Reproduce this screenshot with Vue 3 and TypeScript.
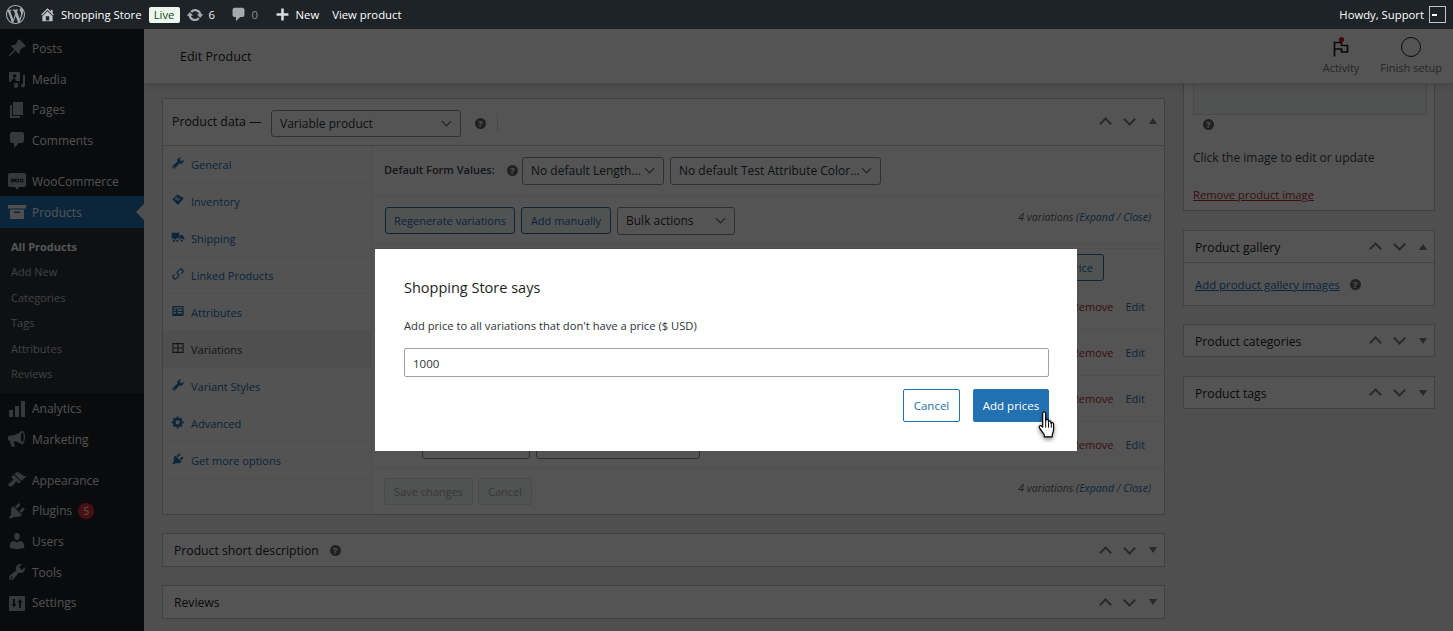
<template>
  <div class="page">
    <header class="adminbar">
      <svg class="ab-logo" viewBox="0 0 20 20"><path :d="icons.wp" /></svg>
      <svg class="ab-home" viewBox="0 0 20 20"><path :d="icons.home" /></svg>
      <span class="ab-site">Shopping Store</span>
      <span class="ab-live">Live</span>
      <svg class="ab-updates" viewBox="0 0 20 20"><path :d="icons.updates" /></svg>
      <span class="ab-count">6</span>
      <svg class="ab-comment" viewBox="0 0 20 20"><path :d="icons.comment" /></svg>
      <span class="ab-count muted">0</span>
      <svg class="ab-plus" viewBox="0 0 20 20"><path :d="icons.plus" /></svg>
      <span class="ab-new">New</span>
      <span class="ab-view">View product</span>
      <span class="ab-howdy">Howdy, Support</span>
      <span class="ab-avatar"><b></b></span>
    </header>

    <div class="layout">
      <aside class="sidebar">
        <template v-for="item in menu" :key="item.label">
          <div class="menu-item" :class="{ active: item.active, gap: item.gap }">
            <svg viewBox="0 0 20 20"><path :d="item.icon" fill-rule="evenodd" /></svg>
            <span>{{ item.label }}</span>
            <em v-if="item.badge" class="badge">{{ item.badge }}</em>
          </div>
          <ul v-if="item.active" class="submenu">
            <li v-for="(sub, i) in submenu" :key="sub" :class="{ current: i === 0 }">{{ sub }}</li>
          </ul>
        </template>
      </aside>

      <main class="main">
        <div class="screen-head">
          <h1>Edit Product</h1>
          <div class="head-actions">
            <div class="head-btn activity">
              <svg viewBox="0 0 16 20">
                <path d="M1.500 19.500V5.500h7v3h6v6.500H8.500v-3H1.500" fill="none" stroke="#1e1e1e" stroke-width="1.700" />
                <circle cx="8.500" cy="2.600" r="2.600" fill="#cc1818" />
              </svg>
              <span>Activity</span>
            </div>
            <div class="head-btn setup">
              <i class="ring"></i>
              <span>Finish setup</span>
            </div>
          </div>
        </div>

        <div class="content">
          <div class="col-left">
            <section class="box product-data">
              <div class="pd-head">
                <span class="pd-title">Product data —</span>
                <div class="select type-select">Variable product<i class="caret"></i></div>
                <i class="help">?</i>
                <i class="pd-sep"></i>
                <div class="handles"><i class="up"></i><i class="down"></i><i class="tri"></i></div>
              </div>
              <div class="pd-body">
                <ul class="tabs">
                  <li v-for="tab in tabs" :key="tab.label" :class="{ active: tab.label === 'Variations' }">
                    <svg viewBox="0 0 20 20"><path :d="tab.icon" fill-rule="evenodd" /></svg>
                    {{ tab.label }}
                  </li>
                </ul>
                <div class="panel">
                  <div class="defaults">
                    <strong>Default Form Values:</strong>
                    <i class="help">?</i>
                    <div class="select length">No default Length…<i class="caret"></i></div>
                    <div class="select color">No default Test Attribute Color…<i class="caret"></i></div>
                  </div>
                  <div class="toolbar">
                    <button class="btn regen">Regenerate variations</button>
                    <button class="btn manual">Add manually</button>
                    <div class="select bulk">Bulk actions<i class="caret"></i></div>
                    <span class="var-count">4 variations (<a>Expand</a> / <a>Close</a>)</span>
                  </div>
                  <div class="notice">
                    <button class="btn">Add price</button>
                  </div>
                  <div v-for="n in 4" :key="n" class="var-row">
                    <div class="select any-length">Any Length…<i class="caret"></i></div>
                    <div class="select any-color">Any Test Attribute Color…<i class="caret"></i></div>
                    <a class="remove">Remove</a>
                    <a class="edit">Edit</a>
                  </div>
                  <div class="panel-foot">
                    <button class="btn disabled">Save changes</button>
                    <button class="btn disabled">Cancel</button>
                    <span class="var-count">4 variations (<a>Expand</a> / <a>Close</a>)</span>
                  </div>
                </div>
              </div>
            </section>

            <section class="box bar">
              <h2>Product short description</h2>
              <i class="help">?</i>
              <div class="handles"><i class="up"></i><i class="down"></i><i class="tri closed"></i></div>
            </section>
            <section class="box bar">
              <h2>Reviews</h2>
              <div class="handles"><i class="up"></i><i class="down"></i><i class="tri closed"></i></div>
            </section>
          </div>

          <div class="col-right">
            <section class="box image-box">
              <div class="image-holder"></div>
              <i class="help">?</i>
              <p>Click the image to edit or update</p>
              <a class="remove-image">Remove product image</a>
            </section>

            <section class="box side-box">
              <div class="side-head">
                <h2>Product gallery</h2>
                <div class="handles"><i class="up"></i><i class="down"></i><i class="tri"></i></div>
              </div>
              <div class="gallery-body">
                <a>Add product gallery images</a>
                <i class="help">?</i>
              </div>
            </section>
            <section class="box side-box">
              <div class="side-head flat">
                <h2>Product categories</h2>
                <div class="handles"><i class="up"></i><i class="down"></i><i class="tri closed"></i></div>
              </div>
            </section>
            <section class="box side-box">
              <div class="side-head flat">
                <h2>Product tags</h2>
                <div class="handles"><i class="up"></i><i class="down"></i><i class="tri closed"></i></div>
              </div>
            </section>
          </div>
        </div>
      </main>
    </div>

    <div class="overlay"></div>

    <div class="dialog">
      <h3>Shopping Store says</h3>
      <p>Add price to all variations that don't have a price ($ USD)</p>
      <input class="price-input" type="text" :value="price" />
      <div class="dialog-actions">
        <button class="dlg-cancel">Cancel</button>
        <button class="dlg-ok">Add prices</button>
      </div>
      <svg class="hand" viewBox="0 0 18 26">
        <path
          d="M5 2.200c0-1.700 2.700-1.700 2.700 0v7.400l.2-1c.2-1.300 2.400-1.200 2.400.3v1.100c.3-1.200 2.400-1.100 2.400.4v1c.4-1.100 2.400-.9 2.400.6v5.200c0 1.900-.7 3-1.200 4.400v2.400H6.400v-2.200c-.9-1.400-3-3.700-4.400-6.100-.9-1.600.6-2.800 1.900-1.800L5 15z"
          fill="#fff"
          stroke="#000"
          stroke-width="1.100"
          stroke-linejoin="round"
        />
        <path d="M7.800 10v5.500M10.400 10.500v5M13 11v4.500" stroke="#000" stroke-width=".9" fill="none" />
      </svg>
    </div>
  </div>
</template>

<script setup lang="ts">
import { ref } from 'vue'

interface MenuItem {
  label: string
  icon: string
  active?: boolean
  gap?: boolean
  badge?: string
}

const price = ref('1000')

const icons = {
  wp: 'M20 10c0-5.51-4.49-10-10-10C4.48 0 0 4.49 0 10c0 5.52 4.48 10 10 10 5.51 0 10-4.48 10-10zM7.78 15.37L4.37 6.22c.55-.02 1.17-.08 1.17-.08.5-.06.44-1.13-.06-1.11 0 0-1.45.11-2.37.11-.18 0-.37 0-.58-.01C4.12 2.69 6.87 1.11 10 1.11c2.33 0 4.45.87 6.05 2.34-.68-.11-1.65.39-1.65 1.58 0 .74.45 1.36.9 2.1.35.61.55 1.36.55 2.46 0 1.49-1.4 5-1.4 5l-3.03-8.37c.54-.02.82-.17.82-.17.5-.05.44-1.25-.06-1.22 0 0-1.44.12-2.38.12-.87 0-2.33-.12-2.33-.12-.5-.03-.56 1.2-.06 1.22l.92.08 1.26 3.41zM17.41 10c.24-.64.74-1.87.43-4.25.7 1.29 1.05 2.71 1.05 4.25 0 3.29-1.73 6.24-4.4 7.78.97-2.59 1.94-5.2 2.92-7.78zM6.1 18.09C3.12 16.65 1.11 13.53 1.11 10c0-1.3.23-2.48.72-3.59C3.25 10.3 4.67 14.2 6.1 18.09zm4.03-6.63l2.58 6.98c-.86.29-1.76.45-2.71.45-.79 0-1.57-.11-2.29-.33.81-2.38 1.62-4.74 2.42-7.1z',
  home: 'M16 8.5l1.53 1.53-1.06 1.06L10 4.62l-6.47 6.47-1.06-1.06L10 2.5l4 4v-2h2v4zm-6-2.46l6 5.99V18H4v-5.97zM12 17v-5H8v5h4z',
  updates: 'M10.2 3.28c3.53 0 6.43 2.61 6.92 6h2.08l-3.5 4-3.5-4h2.32c-.45-1.97-2.21-3.45-4.32-3.45-1.45 0-2.73.71-3.54 1.78L4.95 5.66C6.23 4.2 8.11 3.28 10.2 3.28zm-.4 13.44c-3.52 0-6.43-2.61-6.92-6H.8l3.5-4c1.17 1.33 2.33 2.67 3.5 4H5.48c.45 1.97 2.21 3.45 4.32 3.45 1.45 0 2.73-.71 3.54-1.78l1.71 1.95c-1.28 1.46-3.15 2.38-5.25 2.38z',
  comment: 'M5 2h10q1.500 0 2 2v7q-.3 2-2 2h-3l-5 5v-5H5q-1.700 0-2-2V4q.5-2 2-2z',
  plus: 'M17 8.500v3h-5.500V17h-3v-5.500H3v-3h5.500V3h3v5.500z',
  pin: 'M10.44 3.02l1.82-1.82 6.51 6.51-1.82 1.82-1.05-.21-3.2 3.2.26 2.1-1.26 1.26-3.3-3.3-4.9 4.9-1.9.9.9-1.9 4.9-4.9-3.3-3.3 1.26-1.26 2.1.26 3.2-3.2z',
  media: 'M3 3h9a1 1 0 0 1 1 1v8H9v-1l-2-2-3 3v1H3a1 1 0 0 1-1-1V4a1 1 0 0 1 1-1zm4.500 2.200a1.800 1.800 0 1 0 0 3.600 1.800 1.800 0 0 0 0-3.600zM16 6h2v10.500a2 2 0 1 1-2-2V6zM7 14h4v3a2 2 0 1 1-1.500-1.900V15.500H7z',
  pages: 'M6 15V2h10v13H6zm-1 1h8v2H3V5h2v11z',
  woo: 'M3 2h14a2 2 0 0 1 2 2v10a2 2 0 0 1-2 2h-5l-2 3-2-3H3a2 2 0 0 1-2-2V4a2 2 0 0 1 2-2zm.5 5.500l.8 4h1l.7-2.400.8 2.400h1l.8-4h-1l-.4 2.300-.7-2.300h-.9l-.7 2.300-.4-2.300zm6.600 0a2 2 0 1 0 0 4 2 2 0 0 0 0-4zm0 1a1 1 0 1 1 0 2 1 1 0 0 1 0-2zm4.400-1a2 2 0 1 0 0 4 2 2 0 0 0 0-4zm0 1a1 1 0 1 1 0 2 1 1 0 0 1 0-2z',
  archive: 'M19 6.500H1V3h18v3.500zM3 7.500h14V17H3V7.500zm4 2v1.600h6V9.500H7z',
  analytics: 'M2 11h4v7H2zM8 7h4v11H8zM14 2h4v16h-4z',
  megaphone: 'M18 7.500c0-3-1.200-5.500-2.700-5.500-.9 0-1.600.5-2.300 1.200C10.800 5 7 6.200 3 6.500c-1.200.1-2 1-2 2.200v1c0 1.100.7 2 1.800 2.200l1.700 5.400c.2.6.7.9 1.300.8l1.200-.3c.6-.2.9-.8.7-1.400L6.500 12.300c2.600.1 4.800.8 6.500 2 .7.7 1.400 1.200 2.300 1.200C16.800 15.500 18 11 18 7.500zm-2.700 5.500c-.8 0-1.500-2.300-1.500-5s.7-4.500 1.500-4.500 1.500 1.800 1.500 4.500-.7 5-1.500 5z',
  brush: 'M14.48 11.06L7.41 3.99l1.5-1.5c.5-.56 2.3-.47 3.51.32 1.21.8 1.43 1.28 2.91 2.1 1.18.64 2.45 1.26 4.45.85zm-.71.71L6.7 4.7 4.93 6.47c-.39.39-.39 1.02 0 1.41l1.06 1.06c.39.39.39 1.03 0 1.42-.6.6-1.43 1.11-2.21 1.69-.35.26-.7.53-1.01.84C1.43 13.01.95 14.71 2 15.95c1.05 1.05 2.95.57 4.2-.79.31-.31.58-.66.84-1.01.58-.78 1.09-1.61 1.69-2.21.39-.39 1.03-.39 1.42 0l1.06 1.06c.39.39 1.02.39 1.41 0z',
  plugin: 'M13.11 4.36L9.87 7.6 8 5.73l3.24-3.24c.35-.34 1.05-.2 1.56.32.52.51.66 1.21.31 1.55zm-8 1.77l.91-1.12 9.01 9.01-1.19.84c-.71.71-2.63 1.16-3.82 1.16H6.14L4.9 17.26c-.59.59-1.54.59-2.12 0-.59-.58-.59-1.53 0-2.12l1.24-1.24v-3.88c0-1.13.4-3.19 1.09-3.89zm7.26 3.97l3.24-3.24c.34-.35 1.04-.21 1.55.31.52.51.66 1.21.31 1.55l-3.24 3.25z',
  users: 'M10 9.25c-2.27 0-2.73-3.44-2.73-3.44C7 4.02 7.82 2 9.97 2c2.16 0 2.98 2.02 2.71 3.81 0 0-.41 3.44-2.68 3.44zm0 2.57L12.72 10c2.39 0 4.52 2.33 4.52 4.53v2.49s-3.65 1.13-7.24 1.13c-3.65 0-7.24-1.13-7.24-1.13v-2.49c0-2.25 1.94-4.48 4.47-4.48z',
  wrench: 'M16.68 9.77c-1.34 1.34-3.3 1.67-4.95.99l-5.41 6.52c-.99.99-2.59.99-3.58 0s-.99-2.59 0-3.57l6.52-5.42c-.68-1.65-.35-3.61.99-4.95 1.28-1.28 3.12-1.62 4.72-1.06l-2.89 2.89 2.82 2.82 2.86-2.87c.53 1.58.18 3.39-1.08 4.65zM3.81 16.21c.4.39 1.04.39 1.43 0 .4-.4.4-1.04 0-1.43-.39-.4-1.03-.4-1.43 0-.39.39-.39 1.03 0 1.43z',
  settings: 'M3 3h14a1 1 0 0 1 1 1v13a1 1 0 0 1-1 1H3a1 1 0 0 1-1-1V4a1 1 0 0 1 1-1zm3 3v5H4.500L7 14.500 9.500 11H8V6zm7 0l-2.500 3.500H12V15h2V9.500h1.500z',
  tag: 'M2 9l7-7 9 5-1 2-7 8-8-8zm6-3.500L5 8.500l1 1 3-3zm2 1l-3 3 1 1 3-3zm2 1l-3 3 1 1 3-3z',
  truck: 'M1 4h11v10h-.5a2.500 2.500 0 0 0-5 0h-1a2.500 2.500 0 0 0-4.500-1zm12 3h3l3 3.500V14h-1a2.500 2.500 0 0 0-4.800-.2H13zM4 14a1.500 1.500 0 1 1 0 3 1.500 1.500 0 0 1 0-3zm11.500 0a1.500 1.500 0 1 1 0 3 1.500 1.500 0 0 1 0-3zM9 14a1.500 1.500 0 1 1 0 3 1.500 1.500 0 0 1 0-3z',
  link: 'M16.900 3.100a3.700 3.700 0 0 0-5.200 0L9 5.800a3.700 3.700 0 0 0 0 5.200l1.100-1.100a2.200 2.200 0 0 1 0-3l2.700-2.700a2.200 2.200 0 0 1 3 3l-1.300 1.300a5 5 0 0 1 .3 2l2.100-2.100a3.700 3.700 0 0 0 0-5.300zM3.100 16.900a3.700 3.700 0 0 0 5.200 0L11 14.200a3.700 3.700 0 0 0 0-5.200L9.900 10.100a2.200 2.200 0 0 1 0 3l-2.700 2.700a2.200 2.200 0 0 1-3-3l1.300-1.300a5 5 0 0 1-.3-2L3.100 11.600a3.700 3.700 0 0 0 0 5.300z',
  list: 'M2 3h16v14H2V3zm1.500 3.500h13V4.500h-13zM4 8v2h3V8zm5 0v2h7V8zm-5 3.500v2h3v-2zm5 0v2h7v-2z',
  grid: 'M2 3h16v14H2V3zm1.500 1.500v4.700h5.700V4.500zm7.200 0v4.700h5.800V4.500zM3.500 10.800v4.700h5.700v-4.700zm7.200 0v4.700h5.800v-4.700z',
  gear: 'M18 12h-2.180c-.17.7-.44 1.350-.81 1.930l1.540 1.540-2.100 2.100-1.540-1.540c-.58.36-1.230.63-1.910.79V19H8v-2.180c-.68-.16-1.330-.43-1.910-.79l-1.540 1.540-2.120-2.120 1.540-1.540c-.36-.58-.63-1.230-.79-1.910H1V9.030h2.170c.16-.7.44-1.350.8-1.940L2.430 5.550l2.100-2.100 1.540 1.540c.58-.37 1.240-.64 1.930-.81V2h3v2.180c.68.16 1.330.43 1.910.79l1.540-1.540 2.120 2.120-1.540 1.540c.36.59.64 1.240.8 1.940H18V12zm-8.500 1.500c1.660 0 3-1.340 3-3s-1.340-3-3-3-3 1.340-3 3 1.340 3 3 3z'
}

const menu: MenuItem[] = [
  { label: 'Posts', icon: icons.pin },
  { label: 'Media', icon: icons.media },
  { label: 'Pages', icon: icons.pages },
  { label: 'Comments', icon: icons.comment },
  { label: 'WooCommerce', icon: icons.woo, gap: true },
  { label: 'Products', icon: icons.archive, active: true },
  { label: 'Analytics', icon: icons.analytics },
  { label: 'Marketing', icon: icons.megaphone },
  { label: 'Appearance', icon: icons.brush, gap: true },
  { label: 'Plugins', icon: icons.plugin, badge: '5' },
  { label: 'Users', icon: icons.users },
  { label: 'Tools', icon: icons.wrench },
  { label: 'Settings', icon: icons.settings }
]

const submenu = ['All Products', 'Add New', 'Categories', 'Tags', 'Attributes', 'Reviews']

const tabs = [
  { label: 'General', icon: icons.wrench },
  { label: 'Inventory', icon: icons.tag },
  { label: 'Shipping', icon: icons.truck },
  { label: 'Linked Products', icon: icons.link },
  { label: 'Attributes', icon: icons.list },
  { label: 'Variations', icon: icons.grid },
  { label: 'Variant Styles', icon: icons.wrench },
  { label: 'Advanced', icon: icons.gear },
  { label: 'Get more options', icon: icons.plugin }
]
</script>

<style>
html,
body {
  margin: 0;
  overflow: hidden;
  background: #f0f0f1;
}
</style>

<style scoped>
.page {
  position: relative;
  height: 631px;
  overflow: hidden;
  font-family: "Open Sans", "Noto Sans", sans-serif;
  font-size: 12px;
  color: #3c434a;
  background: #f0f0f1;
}

/* admin bar stays above the dim layer */
.adminbar {
  position: relative;
  z-index: 30;
  display: flex;
  align-items: center;
  height: 29px;
  background: #1d2327;
  color: #f0f0f1;
  padding-left: 6px;
  padding-right: 7px;
  font-size: 11.3px;
}

.adminbar svg {
  fill: #a7aaad;
  flex: none;
}

.ab-logo {
  width: 19px;
  height: 19px;
}

.ab-home {
  width: 17px;
  height: 17px;
  margin-left: 14px;
  fill: #c3c4c7 !important;
}

.ab-site {
  margin-left: 5px;
  color: #fff;
}

.ab-live {
  margin-left: 7px;
  width: 31px;
  height: 16px;
  line-height: 15px;
  text-align: center;
  background: #ecf7ed;
  color: #1e4620;
  border-radius: 2px;
}

.ab-updates {
  width: 18px;
  height: 18px;
  margin-left: 6px;
}

.ab-count {
  margin-left: 5px;
  width: 7px;
}

.ab-count.muted {
  color: #8c8f94;
}

.ab-comment {
  width: 17px;
  height: 17px;
  margin-left: 14px;
}

.ab-comment + .ab-count {
  margin-left: 5px;
}

.ab-plus {
  width: 17px;
  height: 17px;
  margin-left: 15px;
  fill: #dcdcde !important;
}

.ab-new {
  margin-left: 5px;
  color: #fff;
}

.ab-view {
  margin-left: 13px;
  color: #fff;
}

.ab-howdy {
  margin-left: auto;
  color: #fff;
}

.ab-avatar {
  display: flex;
  align-items: center;
  margin-left: 5px;
  width: 15px;
  height: 15px;
  border: 1px solid #c3c4c7;
  background: #1d2327;
}

.ab-avatar b {
  display: block;
  width: 5px;
  height: 2px;
  margin-left: 2px;
  background: #fff;
}

.layout {
  display: flex;
  height: 602px;
}

.sidebar {
  width: 144px;
  flex: none;
  padding-top: 4px;
  background: #1d2327;
  color: #f0f0f1;
  font-size: 12px;
}

.menu-item {
  position: relative;
  display: flex;
  align-items: center;
  height: 30.7px;
}

.menu-item svg {
  width: 20px;
  height: 20px;
  margin-left: 7px;
  margin-right: 5px;
  fill: #a7aaad;
  flex: none;
}

.menu-item.gap {
  margin-top: 10px;
}

.menu-item.active {
  height: 32px;
  background: #2271b1;
  color: #fff;
}

.menu-item.active svg {
  fill: #f0f0f1;
}

.menu-item.active::after {
  content: "";
  position: absolute;
  right: 0;
  top: 8px;
  border: 8px solid transparent;
  border-left: 0;
  border-right-color: #f0f0f1;
}

.badge {
  margin-left: 6px;
  width: 16px;
  height: 16px;
  line-height: 16px;
  border-radius: 50%;
  background: #d63638;
  color: #fff;
  font-size: 10px;
  font-style: normal;
  text-align: center;
}

.submenu {
  list-style: none;
  margin: 0;
  padding: 5.5px 0 7.1px 11px;
  background: #2c3338;
  color: #c3c4c7;
  font-size: 11px;
}

.submenu li {
  height: 25.4px;
  line-height: 25.4px;
}

.submenu li.current {
  color: #fff;
  font-weight: 700;
}

.main {
  flex: 1;
  min-width: 0;
}

.screen-head {
  position: relative;
  z-index: 2;
  display: flex;
  justify-content: space-between;
  height: 54px;
  padding-left: 36px;
  background: #fff;
  box-shadow: 0 2px 10px rgba(0, 0, 0, .18);
}

.screen-head h1 {
  margin: 0;
  font-size: 12.5px;
  font-weight: 500;
  line-height: 56px;
  color: #1d2327;
}

.head-actions {
  display: flex;
  gap: 21px;
  padding-right: 11px;
}

.head-btn {
  display: flex;
  flex-direction: column;
  align-items: center;
  padding-top: 8px;
  font-size: 11px;
  color: #757575;
}

.head-btn svg {
  width: 16px;
  height: 20px;
}

.head-btn span {
  margin-top: 3px;
  line-height: 16px;
}

.ring {
  display: block;
  box-sizing: border-box;
  width: 20px;
  height: 20px;
  border: 1.5px solid #1e1e1e;
  border-radius: 50%;
}

.content {
  display: flex;
  gap: 18px;
  padding-left: 18px;
}

.col-left {
  width: 1003px;
  flex: none;
  padding-top: 15px;
}

.col-right {
  width: 252px;
  flex: none;
}

.box {
  box-sizing: border-box;
  border: 1px solid #c3c4c7;
  background: #fff;
}

.select {
  position: relative;
  box-sizing: border-box;
  display: flex;
  align-items: center;
  height: 27px;
  padding-left: 8px;
  border: 1px solid #8c8f94;
  border-radius: 3px;
  background: #fff;
  color: #2c3338;
  font-size: 12px;
  white-space: nowrap;
  overflow: hidden;
}

.caret {
  position: absolute;
  right: 10px;
  top: 7px;
  width: 6px;
  height: 6px;
  border-right: 1.5px solid #50575e;
  border-bottom: 1.5px solid #50575e;
  transform: rotate(45deg);
  background: #fff;
}

.help {
  display: block;
  flex: none;
  width: 11px;
  height: 11px;
  border-radius: 50%;
  background: #666;
  color: #fff;
  font-size: 9px;
  font-weight: 700;
  font-style: normal;
  line-height: 11px;
  text-align: center;
}

.handles {
  display: flex;
  align-items: center;
  margin-left: auto;
}

.handles i {
  display: block;
  box-sizing: border-box;
}

.handles .up,
.handles .down {
  width: 9px;
  height: 9px;
  border-left: 2px solid #787c82;
  border-top: 2px solid #787c82;
}

.handles .up {
  transform: translateY(2px) rotate(45deg);
}

.handles .down {
  margin-left: 15px;
  transform: translateY(-2px) rotate(225deg);
}

.handles .tri {
  margin-left: 15px;
  border: 4px solid transparent;
  border-top: 0;
  border-bottom: 6px solid #787c82;
}

.handles .tri.closed {
  border-bottom: 0;
  border-top: 6px solid #787c82;
}

.pd-head {
  display: flex;
  align-items: center;
  height: 46px;
  padding: 0 7px 0 9px;
  border-bottom: 1px solid #c3c4c7;
}

.pd-title {
  width: 99px;
  flex: none;
  font-size: 12.3px;
  color: #1d2327;
  font-weight: 500;
  margin-top: -2px;
}

.type-select {
  width: 190px;
  margin-top: 3px;
}

.pd-head .help {
  margin-left: 14px;
  margin-top: 2px;
}

.pd-sep {
  width: 1px;
  height: 17px;
  margin-left: 11px;
  background: #dcdcde;
}

.pd-head .handles {
  margin-top: -2px;
}

.pd-body {
  display: flex;
}

.tabs {
  list-style: none;
  margin: 0;
  padding: 0;
  width: 209px;
  flex: none;
  box-sizing: border-box;
  background: #fafafa;
  border-right: 1px solid #eee;
}

.tabs li {
  display: flex;
  align-items: center;
  box-sizing: border-box;
  height: 37px;
  padding-left: 8px;
  border-bottom: 1px solid #eee;
  color: #2271b1;
  font-size: 11px;
}

.tabs li svg {
  width: 14px;
  height: 14px;
  margin-right: 6px;
  margin-top: -3px;
  fill: #2271b1;
}

.tabs li.active {
  background: #eee;
  color: #3c434a;
}

.tabs li.active svg {
  fill: #3c434a;
}

.panel {
  flex: 1;
  min-width: 0;
  font-size: 11px;
}

.defaults {
  display: flex;
  align-items: center;
  box-sizing: border-box;
  height: 50px;
  padding-left: 12px;
  border-bottom: 1px solid #eee;
}

.defaults strong {
  width: 123px;
  flex: none;
  font-size: 11px;
  font-weight: 600;
  margin-top: -2px;
}

.defaults .select {
  height: 28px;
}

.length {
  width: 142px;
  margin-left: 4px;
}

.color {
  width: 211px;
  margin-left: 6px;
}

.toolbar {
  display: flex;
  align-items: center;
  box-sizing: border-box;
  height: 48px;
  padding: 1px 13px 0 13px;
  border-bottom: 1px solid #eee;
}

.btn {
  box-sizing: border-box;
  height: 27px;
  padding: 0 10px;
  border: 1px solid #2271b1;
  border-radius: 3px;
  background: #f6f7f7;
  color: #2271b1;
  font: inherit;
  font-size: 11px;
}

.regen {
  width: 130px;
  padding: 0;
}

.manual {
  width: 90px;
  padding: 0;
  margin-left: 6px;
}

.bulk {
  width: 118px;
  height: 28px;
  margin-top: 1px;
  margin-left: 6px;
}

.var-count {
  margin-left: auto;
  margin-top: -7px;
  font-size: 10.6px;
  font-style: italic;
  color: #646970;
}

.var-count a {
  color: #2271b1;
}

.notice {
  display: flex;
  justify-content: flex-end;
  box-sizing: border-box;
  height: 40px;
  padding: 5px 60px 0 0;
  margin-top: 4px;
  border-top: 1px solid #eee;
  margin-bottom: -4px;
}

.var-row {
  display: flex;
  align-items: center;
  box-sizing: border-box;
  height: 46px;
  padding: 0 19px 0 50px;
  border-bottom: 1px solid #eee;
}

/* text sits high in these so only the lower edge shows under the dialog */
.any-length {
  width: 108px;
  height: 26px;
  margin-top: 2px;
  padding-bottom: 9px;
  font-size: 11px;
}

.any-color {
  width: 164px;
  height: 26px;
  margin-left: 6px;
  margin-top: 2px;
  padding-bottom: 9px;
  font-size: 11px;
}

.remove {
  margin-left: auto;
  color: #b32d2e;
  font-size: 11px;
}

.edit {
  margin-left: 12px;
  color: #2271b1;
  font-size: 11px;
}

.panel-foot {
  display: flex;
  align-items: center;
  gap: 5px;
  box-sizing: border-box;
  height: 46px;
  padding: 1px 13px 0 12px;
}

.btn.disabled {
  border-color: #dcdcde;
  color: #a7aaad;
  padding: 0 9px;
}

.bar {
  display: flex;
  align-items: center;
  height: 34px;
  margin-top: 18px;
  padding: 0 7px 0 11px;
}

.bar h2,
.side-head h2 {
  margin: 0;
  font-size: 12.2px;
  font-weight: 500;
  color: #1d2327;
}

.side-head h2 {
  margin-top: 1px;
}

.bar .help {
  margin-left: 11px;
}

.image-box {
  height: 128px;
  border-top: 0;
  padding: 0 7px 0 9px;
  font-size: 12px;
}

.image-holder {
  height: 31px;
  background: #f6f7f7;
  border: 1px solid #dcdcde;
  border-top: 0;
}

.image-box .help {
  margin: 4px 0 0 10px;
}

.image-box p {
  margin: 19px 0 0;
  line-height: 18px;
}

.remove-image {
  display: block;
  margin-top: 19px;
  line-height: 18px;
  font-size: 11.2px;
  color: #b32d2e;
  text-decoration: underline;
}

.side-box {
  margin-top: 19px;
}

.side-box:nth-child(3) {
  margin-top: 18px;
}

.side-head {
  display: flex;
  align-items: center;
  box-sizing: border-box;
  height: 32px;
  padding: 0 7px 0 11px;
  border-bottom: 1px solid #c3c4c7;
}

.side-head.flat {
  height: 31px;
  border-bottom: 0;
}

.gallery-body {
  display: flex;
  align-items: center;
  height: 42px;
  padding-left: 11px;
  font-size: 11.4px;
}

.gallery-body a {
  color: #2271b1;
  text-decoration: underline;
}

.gallery-body .help {
  margin-left: 10px;
}

.overlay {
  position: absolute;
  inset: 0;
  z-index: 20;
  background: rgba(0, 0, 0, .67);
}

.dialog {
  position: absolute;
  z-index: 25;
  left: 375px;
  top: 249px;
  box-sizing: border-box;
  width: 702px;
  height: 202px;
  padding: 29px 28px 0 29px;
  background: #fff;
  font-size: 11.2px;
  color: #2c3338;
}

.dialog h3 {
  margin: 0;
  font-size: 14.5px;
  font-weight: 500;
  line-height: 20px;
  color: #1e1e1e;
}

.dialog p {
  margin: 19px 0 0;
  line-height: 18px;
}

.price-input {
  display: block;
  box-sizing: border-box;
  width: 100%;
  height: 29px;
  margin-top: 13px;
  padding: 1px 8px 0;
  border: 1px solid #a0a0a0;
  border-radius: 2px;
  font: inherit;
  font-size: 11.5px;
  color: #2c3338;
  outline: none;
}

.dialog-actions {
  display: flex;
  justify-content: flex-end;
  gap: 13px;
  margin-top: 12px;
}

.dialog-actions button {
  box-sizing: border-box;
  height: 33px;
  border-radius: 2px;
  font: inherit;
  font-size: 11.5px;
}

.dlg-cancel {
  width: 57px;
  border: 1px solid #2271b1;
  background: #fff;
  color: #2271b1;
}

.dlg-ok {
  width: 76px;
  border: 1px solid #2271b1;
  background: #2271b1;
  color: #fff;
}

.hand {
  position: absolute;
  left: 662px;
  top: 162px;
  width: 20px;
  height: 28px;
  filter: drop-shadow(0 2px 2px rgba(0, 0, 0, .45));
}
</style>
